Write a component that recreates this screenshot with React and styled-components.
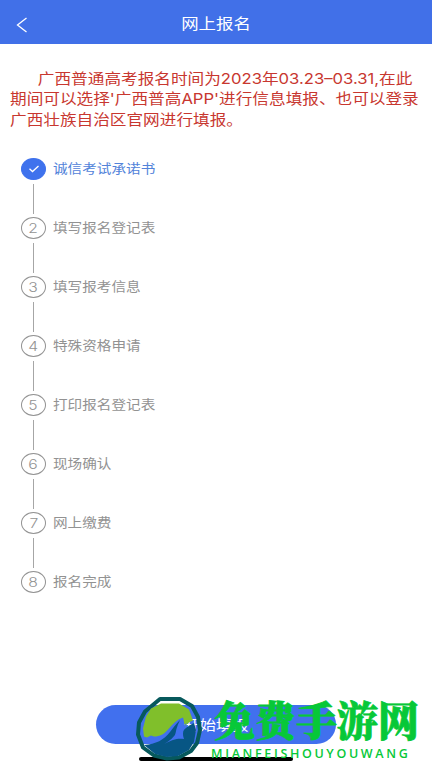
import React from 'react';
import styled, { createGlobalStyle } from 'styled-components';

const GlobalStyle = createGlobalStyle`
  * {
    box-sizing: border-box;
  }

  body {
    margin: 0;
    background: #fff;
    font-family: Inter, 'Noto Sans CJK SC', sans-serif;
  }
`;

const Page = styled.div`
  display: flex;
  flex-direction: column;
  width: 432px;
  height: 768px;
  overflow: hidden;
  background: #fff;
`;

// Glyphs are a little wider than tall everywhere in this layout
const Wide = styled.span`
  display: block;
  width: max-content;
  white-space: pre;
  transform: scaleX(${(props) => props.$ratio || 1.16});
  transform-origin: ${(props) => props.$origin || 'left'} center;
`;

const Header = styled.header`
  display: grid;
  grid-template-columns: 60px 1fr 60px;
  align-items: center;
  height: 44px;
  flex: none;
  padding-top: 4px;
  background: #4170e8;
  color: #fff;
`;

const BackButton = styled.button`
  display: flex;
  padding: 1px 0 0 16px;
  border: none;
  background: none;
  color: inherit;
`;

const Title = styled.h1`
  display: flex;
  justify-content: center;
  margin: 0;
  font-size: 15px;
  font-weight: 400;
  line-height: 20px;
`;

const Notice = styled.p`
  margin: 24.5px 0 0 10px;
  flex: none;
  color: #c8372f;
  font-size: 14.35px;
  line-height: 20.5px;
`;

const Steps = styled.ol`
  display: flex;
  flex-direction: column;
  margin: 27.5px 0 0;
  padding: 0 0 0 21px;
  list-style: none;
`;

const Step = styled.li`
  display: grid;
  grid-template-columns: 25px 1fr;
  column-gap: 7px;
  height: 59.15px;
  color: ${(props) => (props.$active ? '#5283da' : '#929292')};
`;

const Marker = styled.div`
  display: flex;
  flex-direction: column;
  align-items: center;
`;

const Badge = styled.span`
  display: flex;
  align-items: center;
  justify-content: center;
  width: 25px;
  height: 22px;
  flex: none;
  border: 1px solid ${(props) => (props.$active ? '#3f72ed' : '#929292')};
  border-radius: 50%;
  background: ${(props) => (props.$active ? '#3f72ed' : '#fff')};
  font-size: 13.5px;
  font-weight: 300;
  line-height: 20px;
`;

const Connector = styled.span`
  width: 1.5px;
  height: 30px;
  margin-top: 4px;
  background: #a6a6a6;
`;

const StepLabel = styled.span`
  font-size: 12.6px;
  line-height: 22px;
`;

const Footer = styled.footer`
  position: relative;
  display: flex;
  flex-direction: column;
  align-items: center;
  height: 78px;
  margin-top: auto;
  padding-top: 15px;
`;

const SubmitButton = styled.button`
  display: flex;
  align-items: center;
  justify-content: center;
  width: 240px;
  height: 39px;
  flex: none;
  padding: 0 0 2px;
  border: none;
  border-radius: 20px;
  background: #4170ee;
  color: #fff;
  font-family: inherit;
  font-size: 14px;
`;

const HomeBar = styled.div`
  width: 154px;
  height: 4px;
  margin-top: 13px;
  border-radius: 2px;
  background: #000;
`;

const Watermark = styled.div`
  position: absolute;
  left: 134px;
  top: 4px;
  display: flex;
`;

const BrandText = styled.div`
  display: flex;
  flex-direction: column;
  margin-left: 10px;
  padding-top: 2px;
  color: #07c838;
`;

const BrandName = styled.span`
  font-family: 'Noto Serif CJK SC', 'Noto Sans CJK SC', serif;
  font-size: 41px;
  font-weight: 900;
  line-height: 46px;
  white-space: nowrap;
  -webkit-text-stroke: 0.8px #07c838;
`;

const BrandLatin = styled.span`
  margin: 5px 0 0 -3px;
  font-family: 'Open Sans', 'Noto Sans', sans-serif;
  font-size: 12.5px;
  font-weight: 600;
  letter-spacing: 2.65px;
  line-height: 14px;
  white-space: nowrap;
`;

const steps = [
    '诚信考试承诺书',
    '填写报名登记表',
    '填写报考信息',
    '特殊资格申请',
    '打印报名登记表',
    '现场确认',
    '网上缴费',
    '报名完成',
];

const notice = [
    { text: '广西普通高考报名时间为2023年03.23–03.31,在此', indent: true },
    { text: "期间可以选择'广西普高APP'进行信息填报、也可以登录" },
    { text: '广西壮族自治区官网进行填报。' },
];

const NoticeLine = styled(Wide)`
  padding-left: ${(props) => (props.$indent ? '24px' : 0)};
`;

const BackIcon = () => (
    <svg width="12" height="16" viewBox="0 0 12 16" fill="none">
        <path d="M10.5 1 1.5 8l9 7" stroke="currentColor" strokeWidth="1.3" />
    </svg>
);

const CheckIcon = () => (
    <svg width="12" height="8" viewBox="0 0 12 8" fill="none">
        <path d="m1.500 3.800 3 2.700L10.500 1" stroke="#fff" strokeWidth="1.3" />
    </svg>
);

const BrandLogo = () => (
    <svg width="70" height="70" viewBox="0 0 70 70">
        <path
            d="M26 5h20l12 7 6 11 2 13-3 13-6 8-12 6.500-12 1-13-3-11-8-5-13 1-12 6-11z"
            fill="none"
            stroke="#07595c"
            strokeWidth="4"
            strokeLinejoin="round"
        />
        <path
            d="M27 9.500h18l10 6 4 11c-3 1-6 3-8 6-1-3-1-6-2-9-6 2-10 6-14 11-5 6-9 8-15 8l-3-1-4 2-3-1-1-8 3-12 5-8z"
            fill="#80bf2b"
        />
        <path
            d="M10 51c12-1 20-5 26-13 3-4 6-8 10-12-3 6-5 12-5 19l3-1c4-7 9-12 16-15l2 7-2 12-5 8-11 6-11 1-12-3z"
            fill="#075684"
        />
        <path d="M30 50c6-3 10-7 13-12 3-4 6-7 10-9-4 6-5 11-3 16-6-1-11 0-20 5z" fill="#4170ee" />
    </svg>
);

const App = () => {
    return (
        <Page>
            <GlobalStyle />
            <Header>
                <BackButton aria-label="返回">
                    <BackIcon />
                </BackButton>
                <Title>
                    <Wide $origin="center">网上报名</Wide>
                </Title>
            </Header>
            <Notice>
                {notice.map((line) => (
                    <NoticeLine key={line.text} $indent={line.indent}>
                        {line.text}
                    </NoticeLine>
                ))}
            </Notice>
            <Steps>
                {steps.map((label, index) => (
                    <Step key={label} $active={index === 0}>
                        <Marker>
                            <Badge $active={index === 0}>
                                {index === 0 ? <CheckIcon /> : <Wide $origin="center">{index + 1}</Wide>}
                            </Badge>
                            {index < steps.length - 1 && <Connector />}
                        </Marker>
                        <StepLabel>
                            <Wide>{label}</Wide>
                        </StepLabel>
                    </Step>
                ))}
            </Steps>
            <Footer>
                <SubmitButton>
                    <Wide $origin="center">开始填报</Wide>
                </SubmitButton>
                <HomeBar />
                <Watermark>
                    <BrandLogo />
                    <BrandText>
                        <BrandName>免费手游网</BrandName>
                        <BrandLatin>MIANFEISHOUYOUWANG</BrandLatin>
                    </BrandText>
                </Watermark>
            </Footer>
        </Page>
    );
};

export default App;
